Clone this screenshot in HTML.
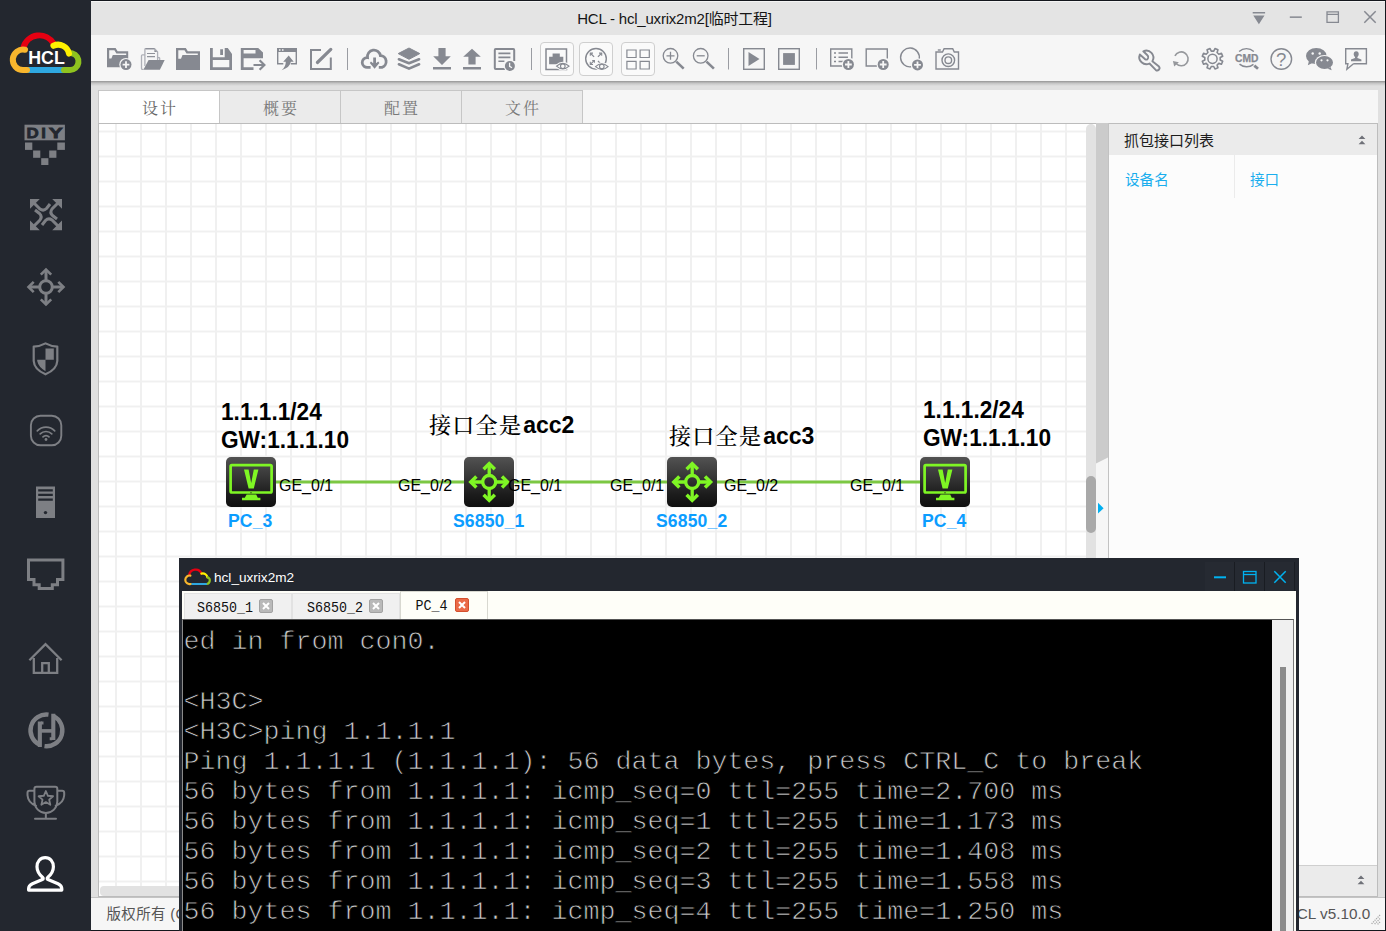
<!DOCTYPE html>
<html lang="zh-CN">
<head>
<meta charset="utf-8">
<title>HCL - hcl_uxrix2m2[临时工程]</title>
<style>
*{box-sizing:border-box;margin:0;padding:0}
html,body{width:1386px;height:931px;overflow:hidden;background:#e0e0e0;font-family:"Liberation Sans","Noto Sans CJK SC",sans-serif}
.abs{position:absolute}
#sidebar{left:0;top:0;width:91px;height:931px;background:#23272f}
#topline{left:91px;top:0;width:1295px;height:1px;background:#14171d}
#titlebar{left:91px;top:1px;width:1294px;height:34px;background:#e4e4e4;border-top:1px solid #f4f4f4}
#title{left:91px;top:1.6px;width:1167px;height:34px;line-height:34px;text-align:center;font-size:15px;letter-spacing:-.2px;color:#151515;white-space:nowrap}
#rightedge{left:1385px;top:0;width:1px;height:931px;background:#14171d}
#toolbar{left:91px;top:35px;width:1294px;height:46px;background:#f6f6f6;}
#tshadow{left:91px;top:81px;width:1294px;height:5px;background:linear-gradient(rgba(0,0,0,.34),rgba(0,0,0,.12) 45%,rgba(0,0,0,0))}
.tbtn{top:42px;width:34px;height:34px;background:#fafafa;border:1px solid #cfcfcf;border-radius:4px}
#tabstrip{left:98px;top:90px;width:1280px;height:33px;background:#f6f6f6}
.tab{top:90px;width:122px;height:34px;border:1px solid #c6c6c6;background:#ebebeb;color:#787878;font-family:"Liberation Serif","Noto Serif CJK SC",serif;font-size:16px;line-height:35px;text-align:center;letter-spacing:2px;padding-left:2px}
.tab.on{background:#fff;border-bottom-color:#fff;color:#666}
#canvas{left:98px;top:123px;width:1000px;height:774px;background:#fff;border:1px solid #bcbcbc;overflow:hidden}
#grid{left:0;top:0;width:1000px;height:774px;
background-image:linear-gradient(to right,#f0f0f0 0,#f0f0f0 2px,transparent 2px),linear-gradient(to bottom,#f0f0f0 0,#f0f0f0 2px,transparent 2px);
background-size:25px 25px,25px 25px;background-position:16px 0,0 6.5px}
#vscroll{left:1086px;top:124px;width:10px;height:762px;background:#e2e2e2;border-radius:5px 5px 0 0}
#vthumb{left:1086px;top:476px;width:10px;height:57px;background:#a9a9a9;border-radius:5px}
#hscroll{left:100px;top:886px;width:986px;height:10px;background:#e2e2e2;border-radius:4px 0 0 4px}
#splitter{left:1096px;top:123px;width:12px;height:774px;background:#cbcbcb}
#panel{left:1109px;top:123px;width:269px;height:774px;background:#fcfcfc;border:1px solid #bdbdbd;border-left:none}
.phead{left:1109px;width:268px;height:31px;background:#ebebeb}
#statusbar{left:91px;top:897px;width:1294px;height:33px;background:#f6f6f6;border-top:1px solid #c4c4c4}
#bottomline{left:91px;top:930px;width:1295px;height:1px;background:#14171d}
.lbl{position:absolute;white-space:nowrap;line-height:1}
.big{font-weight:bold;font-size:22.67px;color:#000;transform:scaleY(1.06);transform-origin:0 80%}
.ge{font-size:16px;color:#000}
.dev{font-weight:bold;font-size:17.6px;letter-spacing:.12px;color:#0c9dff}
.cn{font-family:"Liberation Serif","Noto Serif CJK SC",serif;font-size:22px;letter-spacing:1.3px;color:#000;font-weight:500}
.cn b{font-family:"Liberation Sans",sans-serif;font-size:23px;font-weight:bold;letter-spacing:0;margin-left:1px}
.node{position:absolute;width:50px;height:50px;border-radius:5px;background:linear-gradient(#525252 0%,#3a3a3a 35%,#1c1c1c 75%,#101010 100%)}
#term{left:179px;top:558px;width:1120px;height:373px;background:#23272f}
#termtabs{left:182px;top:591px;width:1114px;height:29px;background:#fefef8}
.ttab{position:absolute;top:593px;height:26px;background:#f0f0f0;border:1px solid #e2e2e2;border-bottom:none;font-family:"Liberation Mono",monospace;font-size:13.33px;color:#111;line-height:29px;white-space:nowrap}
.ttab span{display:inline-block;transform:scaleY(1.14);transform-origin:0 72%}
.ttab.on{top:591px;height:29px;background:#fefef8;border-color:#d8d8d0}
.tx{position:absolute;width:14px;height:14px;border-radius:2px;background:#b4b4b4}
#termscreen{left:182px;top:619px;width:1090px;height:312px;background:#000;overflow:hidden;border-top:1px solid #555;border-left:1px solid #8a8a8a}
#termtext{position:absolute;left:.5px;top:7px;font-family:"Liberation Mono",monospace;font-size:26.67px;line-height:30px;color:#c8c8c8;white-space:pre;-webkit-text-stroke:.75px #000}
#tscroll{left:1272px;top:619px;width:22px;height:312px;background:#f0f0f0;border-right:1px solid #7a7a7a;border-top:1px solid #555}
#tthumb{left:1280px;top:667px;width:6px;height:264px;background:#8b8b8b}
</style>
</head>
<body>
<div id="sidebar" class="abs"></div>
<div id="topline" class="abs"></div>
<div id="titlebar" class="abs"></div>
<div id="title" class="abs">HCL - hcl_uxrix2m2[临时工程]</div>
<div id="toolbar" class="abs"></div>
<div id="tshadow" class="abs"></div>
<div class="abs tbtn" style="left:540px"></div>
<div class="abs tbtn" style="left:579px"></div>
<div class="abs tbtn" style="left:621px"></div>
<svg class="abs" style="left:91px;top:0" width="1295" height="90" viewBox="91 0 1295 90">
<g fill="#868991">
<!-- window controls -->
<path d="M1252.700 12h12.400v1.400h-12.400zM1253.300 15.600h11.200l-5.600 8.600z"/>
<rect x="1289.800" y="16.400" width="12" height="1.500"/>
<!-- 1 new folder -->
<path d="M107 48h8.600l2 3.200h10.600v16h-21.200z"/>
<path d="M109.200 50.200h5.200l2 3.200h9.800v1.600h-13.400l-1.400 3.400h-2.200z" fill="#f6f6f6"/>
<circle cx="126" cy="64.600" r="6.700" fill="#f6f6f6"/><circle cx="126" cy="64.600" r="5.500"/>
<path d="M122.600 63.700h2.500v-2.500h1.800v2.500h2.500v1.800h-2.500v2.500h-1.800v-2.500h-2.500z" fill="#f6f6f6"/>
<!-- 2 open folder with docs -->
<path d="M148.600 60.100h16.100l-4.800 9.700h-16.500z"/><path d="M154.400 48.300l3.600 3.800h-3.600z" fill="#90939a"/>
<!-- 3 folder -->
<path d="M176 48h9.800l2 3.200h12.200v18.800h-24z"/>
<path d="M178.300 50.200h6.200l2 3.200h11.300v1.700h-15.300l-1.500 3.600h-2.700z" fill="#f6f6f6"/>
<!-- 4 save -->
<path d="M210 48h2.800v9.200h11.900V48h3.100l4.200 6v16h-22zM212.800 60v7.300h16.500V60zM220.200 49.300h2.800v5.700h-2.800z" fill-rule="evenodd"/>
<!-- 5 save as -->
<path d="M240.800 48h17.400l4.800 4.600v5.600H243.600v9.100h9.900v2.700h-12.700zM243.600 50.100v3.500h11.900v-3.500z" fill-rule="evenodd"/>
<!-- 6 export -->
<path d="M277 48h20v4h-20z"/>
<path d="M288.700 55.600l5 6.200h-2.900q-.6 5.600-9.200 8.400q4.200-3.200 4.200-8.400h-2.600z"/>
<!-- 10 layers -->
<path d="M409 48l10.800 5.600-10.800 5.700-10.800-5.700z" stroke="#868991" stroke-width="1" stroke-linejoin="round"/>
<!-- 11 download -->
<path d="M438.400 48h7.200v8.300h5.200l-8.800 8.600-8.800-8.600h5.200zM433 67.100h18v2.400h-18z"/>
<!-- 12 upload -->
<path d="M472 48.800l8.800 8h-5.200v7.600h-7.200v-7.600h-5.200zM463 67.100h18v2.400h-18z"/>
<!-- play/stop -->
<path d="M748.500 52v14l11-7z"/><rect x="783.100" y="53.100" width="11.800" height="11.800"/>
</g>
<g fill="none" stroke="#868991">
<!-- window controls -->
<path d="M1327 11.900h11.400v10.400h-11.400zM1327 14.400h11.400" stroke-width="1.300"/>
<path d="M1364.300 11.300l11.400 11.400M1375.700 11.300l-11.400 11.400" stroke-width="1.500"/>
<!-- separators -->
<path d="M347.500 48v22M531.500 48v22M728.500 48v21.500M816.500 48v21.500" stroke="#9a9ca2" stroke-width="1"/>
<!-- 2 docs -->
<path d="M143.600 69.300h-1.200q-.9 0-.9-.9V55.800q0-.9.900-.9h2.600" stroke="#aeb0b7" stroke-width="1.300"/>
<path d="M144.900 66V49.400q0-.7.700-.7h9l3 3.200V60" stroke="#aeb0b7" stroke-width="1.300"/><path d="M145.600 48.700h8.800" stroke="#8d9098" stroke-width="1.300"/>
<path d="M147 53.500h8M147 56.600h8" stroke="#90939a" stroke-width="1.200"/><path d="M158 57.600h1q.7 0 .7.700V60" stroke="#aeb0b7" stroke-width="1.200"/>
<!-- 5 arrow -->
<path d="M253.500 65h10.500M259.600 60.200l4.800 4.800-4.800 4.800" stroke-width="2.200"/>
<!-- 6 export window -->
<path d="M277.700 51v12.800h5.600M290.800 63.800h5.500V51" stroke-width="1.400"/>
<path d="M279 50h1.500M282 50h1.500" stroke="#f6f6f6" stroke-width="1.500"/>
<!-- 7 edit -->
<path d="M321 50h-10v19h19.800V57.600" stroke-width="2"/><path d="M317.400 62.500L330.800 49.400" stroke-width="3.200" stroke-linecap="round"/>
<!-- 9 cloud download -->
<path d="M370.600 67.300H368A4.900 4.900 0 1 1 367.500 57.600A6.480 6.480 0 0 1 380.400 55.600A6 6 0 0 1 382 67.300H378.800" stroke-width="2.800" stroke-linecap="butt"/>
<!-- 10 layers -->
<path d="M398.900 59.300l10.100 4 10.100-4M398.900 64.300l10.100 4.300 10.100-4.300" stroke-width="2.600" stroke-linecap="round" stroke-linejoin="round"/>
<!-- 13 doc clock -->
<path d="M505 69h-9.300q-.9 0-.9-.9V49.900q0-.9.900-.9h17.600q.9 0 .9.900v11" stroke-width="2"/><path d="M498.400 53.400h12M498.400 57.400h12M498.400 61.300h6" stroke-width="1.600"/>
<!-- btn1 -->
<rect x="546" y="49" width="20.500" height="20.500" stroke-width="1.500"/>
<!-- btn2 -->
<circle cx="596" cy="58.800" r="10.300" stroke-width="1.400"/>
<path d="M590.700 53.500l3.400 3.400M601.300 53.500l-3.400 3.400M590.700 64.100l3.400-3.400M598 61l2.300 2.300" stroke-width="1.200"/>
<path d="M590.300 55.800v-2.700h2.700M599 53.100h2.700v2.700M592.200 60.500h2.200v2.200M590.300 61.800v2.700h2.700" stroke-width="1.100"/>
<!-- btn3 -->
<path d="M626.900 50h9.200v7.500h-9.200zM640.100 50h9.200v7.500h-9.200zM626.900 61.400h9.200v7.600h-9.200zM640.100 61.400h9.200v7.600h-9.200z" stroke-width="1.200"/>
<!-- zoom in/out -->
<circle cx="670.500" cy="55.800" r="7.300" stroke-width="1.300"/><path d="M666.500 55.800h8M670.500 51.800v8" stroke-width="1.300"/><path d="M676.300 61.600l7.400 7" stroke-width="2.600"/>
<circle cx="700.700" cy="55.800" r="7.300" stroke-width="1.300"/><path d="M696.700 55.800h8" stroke-width="1.300"/><path d="M706.500 61.600l7.400 7" stroke-width="2.600"/>
<!-- play/stop boxes -->
<rect x="743.700" y="48.700" width="20.600" height="20.600" stroke-width="1.400"/><rect x="778.700" y="48.700" width="20.600" height="20.600" stroke-width="1.400"/>
<!-- list+ -->
<path d="M843 66h-12.300V49h21.100v9.500" stroke-width="1.400"/><path d="M834 53h2M838.500 53h9.500M834 57.300h2M838.500 57.300h9.500M834 61.600h2M838.500 61.600h5" stroke-width="1.500"/>
<!-- rect+ -->
<path d="M877.500 66h-11.300V49h21.100v9.500" stroke-width="1.400"/>
<!-- circle+ -->
<path d="M911.500 66.700a9.400 9.400 0 1 1 7.700-7.500" stroke-width="1.400"/>
<!-- camera -->
<path d="M936 52h6.500l1.600-3.300h8.600l1.600 3.300h4.200v17H936z" stroke-width="1.400"/><path d="M937.800 50h3" stroke-width="1.400"/><circle cx="948.300" cy="60.200" r="6.300" stroke-width="1.400"/><circle cx="948.300" cy="60.200" r="3.300" stroke-width="1.400"/>
<!-- wrench -->
<path d="M1143.300 51.300A7.100 7.100 0 0 1 1152.400 61.300L1159 66.600A2.350 2.350 0 0 1 1155.700 69.900L1149.500 63.500A7.100 7.100 0 0 1 1139.800 54.500L1145.200 59.300Q1147.300 60.400 1148.100 58Q1148.500 56.300 1147.400 55.300z" stroke-width="1.900" stroke-linejoin="round"/>
<!-- refresh -->
<path d="M1174.950 55.900A6.900 6.900 0 1 1 1176.300 63.700" stroke="#96989c" stroke-width="1.600"/>
<!-- gear -->
<circle cx="1212.500" cy="58.800" r="4.600" stroke-width="1.500"/>
<!-- cmd arcs -->
<path d="M1239.100 51.500A10.800 10.800 0 0 1 1253.800 51.500M1239.500 64.100A11 11 0 0 0 1253.500 64.400" stroke-width="1.400"/><path d="M1254.300 65.600L1258 68.700" stroke-width="2.800"/>
<!-- help -->
<circle cx="1281.300" cy="59" r="10.300" stroke-width="1.400"/>
<!-- feedback -->
<path d="M1353.500 63.700h12.900V48.800h-20.700v14.900h2.200l-1 5.500 6.600-5.500" stroke-width="1.400" stroke-linejoin="miter"/>
</g>
<g fill="#868991">
<path d="M373.200 57.400h2.800v5.800l2.200-1.600 1.200 1.500-4.800 5.600-4.800-5.600 1.200-1.500 2.200 1.600z"/>
<!-- refresh arrowhead -->
<path d="M1172.900 61.100l6 1.100-4.700 4.400z" fill="#96989c"/>
<!-- clock -->
<circle cx="509.900" cy="66" r="6.200" fill="#f6f6f6"/><circle cx="509.900" cy="66" r="5"/><path d="M509.600 62.800v3.600l2.400 1.400" stroke="#f6f6f6" stroke-width="1.300" fill="none"/>
<!-- btn1 port -->
<path d="M552.600 53.400h7.200v3.400h3.500v7.400h-14.200v-7.400h3.500z"/>
<path d="M556.5 66.2Q562.8 60.6 569.1 66.2Q562.8 71.8 556.5 66.2z" fill="#fafafa" stroke="#fafafa" stroke-width="3"/><path d="M556.5 66.2Q562.8 60.6 569.1 66.2Q562.8 71.8 556.5 66.2z" fill="none" stroke="#868991" stroke-width="1.100"/><circle cx="562.8" cy="66.2" r="2.300" fill="none" stroke="#868991" stroke-width="1.100"/>
<path d="M595.5 66.6Q601.8 61.0 608.1 66.6Q601.8 72.2 595.5 66.6z" fill="#fafafa" stroke="#fafafa" stroke-width="3"/><path d="M595.5 66.6Q601.8 61.0 608.1 66.6Q601.8 72.2 595.5 66.6z" fill="none" stroke="#868991" stroke-width="1.100"/><circle cx="601.8" cy="66.6" r="2.300" fill="none" stroke="#868991" stroke-width="1.100"/>
<!-- plus circles -->
<g id="plusc"><circle cx="848.400" cy="64.500" r="6.700" fill="#f6f6f6"/><circle cx="848.400" cy="64.500" r="5.500"/><path d="M845 63.600h2.500v-2.500h1.800v2.500h2.500v1.800h-2.500v2.500h-1.800v-2.500H845z" fill="#f6f6f6"/></g>
<use href="#plusc" x="34.800"/><use href="#plusc" x="69.100" y=".4"/>
<!-- wechat -->
<ellipse cx="1316.300" cy="56" rx="10.300" ry="8"/><path d="M1309 61l-1.200 4.200 4.600-2.200z"/>
<ellipse cx="1324.500" cy="62.500" rx="9.700" ry="7.500" fill="#f6f6f6"/><ellipse cx="1324.500" cy="62.500" rx="8.500" ry="6.400"/><path d="M1330.500 67l1.200 3.200-4-1.400z"/>
<circle cx="1312.700" cy="53.500" r="1.200" fill="#f6f6f6"/><circle cx="1319.700" cy="53.500" r="1.200" fill="#f6f6f6"/>
<circle cx="1321.500" cy="60.300" r="1.100" fill="#f6f6f6"/><circle cx="1327.500" cy="60.300" r="1.100" fill="#f6f6f6"/>
<!-- feedback person -->
<path d="M1356.200 51.200a2.500 2.900 0 0 1 2.500 2.900c0 1.400-.6 2.400-1.300 3v.8l4 1.600v1.800h-10.400v-1.800l4-1.600v-.8c-.7-.6-1.300-1.600-1.300-3a2.500 2.900 0 0 1 2.500-2.900z"/>
</g>
<!-- gear teeth -->
<g fill="none" stroke="#868991" stroke-width="1.600" stroke-linejoin="round"><path d="M1213.72 51.10L1214.97 48.60L1217.97 49.84L1217.08 52.49L1218.81 54.22L1221.46 53.33L1222.70 56.33L1220.20 57.58L1220.20 60.02L1222.70 61.27L1221.46 64.27L1218.81 63.38L1217.08 65.11L1217.97 67.76L1214.97 69.00L1213.72 66.50L1211.28 66.50L1210.03 69.00L1207.03 67.76L1207.92 65.11L1206.19 63.38L1203.54 64.27L1202.30 61.27L1204.80 60.02L1204.80 57.58L1202.30 56.33L1203.54 53.33L1206.19 54.22L1207.92 52.49L1207.03 49.84L1210.03 48.60L1211.28 51.10z"/></g>
<text x="1246.700" y="61.600" text-anchor="middle" font-family="Liberation Sans, sans-serif" font-weight="bold" font-size="10.400" fill="#868991" stroke="#868991" stroke-width=".25" textLength="23.400" lengthAdjust="spacingAndGlyphs">CMD</text>
<text x="1281.200" y="65.700" text-anchor="middle" font-family="Liberation Sans, sans-serif" font-size="18.600" fill="#868991">?</text>
</svg>

<div id="tabstrip" class="abs"></div>
<div class="abs tab on" style="left:98px">设计</div>
<div class="abs tab" style="left:219px">概要</div>
<div class="abs tab" style="left:340px">配置</div>
<div class="abs tab" style="left:461px">文件</div>
<div id="canvas" class="abs"><div id="grid" class="abs"></div></div>
<svg class="abs" style="left:0;top:0" width="1386" height="931" viewBox="0 0 1386 931">
<line x1="276" y1="482" x2="920" y2="482" stroke="#7cc843" stroke-width="3"/>
</svg>
<div class="lbl big" style="left:221px;top:401px">1.1.1.1/24</div>
<div class="lbl big" style="left:221px;top:428.5px">GW:1.1.1.10</div>
<div class="lbl big" style="left:923px;top:399px">1.1.1.2/24</div>
<div class="lbl big" style="left:923px;top:426.5px">GW:1.1.1.10</div>
<div class="lbl cn" style="left:429px;top:414px">接口全是<b>acc2</b></div>
<div class="lbl cn" style="left:669px;top:425px">接口全是<b>acc3</b></div>
<div class="node" style="left:226px;top:457px"><svg width="50" height="50" viewBox="0 0 50 50"><rect x="4.600" y="8.100" width="41" height="27.400" rx="1.200" fill="none" stroke="#7ff624" stroke-width="2.700"/><path d="M18 12.6h4.6l2.6 13.5 2.6-13.5h4.6l-4.6 18.8h-5.2z" fill="#7ff624"/><path d="M20.6 37.6h9.6l1.6 3.2h2.6v2.4h-18.4v-2.4h2.8z" fill="#7ff624"/><circle cx="25" cy="35.8" r=".8" fill="#3a5a1a"/></svg></div>
<div class="node" style="left:920px;top:457px"><svg width="50" height="50" viewBox="0 0 50 50"><rect x="4.600" y="8.100" width="41" height="27.400" rx="1.200" fill="none" stroke="#7ff624" stroke-width="2.700"/><path d="M18 12.6h4.6l2.6 13.5 2.6-13.5h4.6l-4.6 18.8h-5.2z" fill="#7ff624"/><path d="M20.6 37.6h9.6l1.6 3.2h2.6v2.4h-18.4v-2.4h2.8z" fill="#7ff624"/><circle cx="25" cy="35.8" r=".8" fill="#3a5a1a"/></svg></div>
<div class="node" style="left:464px;top:457px"><svg width="50" height="50" viewBox="0 0 50 50"><g fill="none" stroke="#7ff624" stroke-width="3.300" stroke-linecap="butt" stroke-linejoin="miter"><circle cx="25.200" cy="25" r="6.500"/><path d="M25.200 18.500V7M25.200 31.500V43M18.700 25H7M31.700 25H43.400"/><path d="M19.600 12.200L25.200 6.600l5.600 5.600M19.600 37.800l5.600 5.600 5.600-5.600M12.400 19.400L6.800 25l5.600 5.600M38 19.400L43.600 25 38 30.600" stroke-width="3.500"/></g></svg></div>
<div class="node" style="left:667px;top:457px"><svg width="50" height="50" viewBox="0 0 50 50"><g fill="none" stroke="#7ff624" stroke-width="3.300" stroke-linecap="butt" stroke-linejoin="miter"><circle cx="25.200" cy="25" r="6.500"/><path d="M25.200 18.500V7M25.200 31.500V43M18.700 25H7M31.700 25H43.400"/><path d="M19.600 12.200L25.200 6.600l5.600 5.600M19.600 37.800l5.600 5.600 5.600-5.600M12.400 19.400L6.800 25l5.600 5.600M38 19.400L43.600 25 38 30.600" stroke-width="3.500"/></g></svg></div>
<div class="lbl ge" style="left:279px;top:478px">GE_0/1</div>
<div class="lbl ge" style="left:398px;top:478px">GE_0/2</div>
<div class="lbl ge" style="left:508px;top:478px">GE_0/1</div>
<div class="lbl ge" style="left:610px;top:478px">GE_0/1</div>
<div class="lbl ge" style="left:724px;top:478px">GE_0/2</div>
<div class="lbl ge" style="left:850px;top:478px">GE_0/1</div>
<div class="lbl dev" style="left:228px;top:513px">PC_3</div>
<div class="lbl dev" style="left:453px;top:513px">S6850_1</div>
<div class="lbl dev" style="left:656px;top:513px">S6850_2</div>
<div class="lbl dev" style="left:922px;top:513px">PC_4</div>

<div id="vscroll" class="abs"></div>
<div id="vthumb" class="abs"></div>
<div id="hscroll" class="abs"></div>
<div id="splitter" class="abs"></div>
<div id="panel" class="abs"></div>
<div class="abs phead" style="top:124px"></div>
<div class="lbl" style="left:1124px;top:133px;font-size:15px;color:#1c1c1c">抓包接口列表</div>
<svg class="abs" style="left:1357px;top:134px" width="10" height="12" viewBox="0 0 10 12"><path d="M5 1.6l3.4 3.4H1.6zM5 6.8l3.4 3.4H1.6z" fill="#6f7178"/></svg>
<div class="abs" style="left:1234px;top:155px;width:1px;height:43px;background:#ebebeb"></div>
<div class="lbl" style="left:1125px;top:172.5px;font-size:14.6px;color:#1aaeee">设备名</div>
<div class="lbl" style="left:1250px;top:172.5px;font-size:14.6px;color:#1aaeee">接口</div>
<div class="abs phead" style="top:865px;border-top:1px solid #cfcfcf"></div>
<svg class="abs" style="left:1356px;top:874px" width="10" height="12" viewBox="0 0 10 12"><path d="M5 1.6l3.4 3.4H1.6zM5 6.8l3.4 3.4H1.6z" fill="#6f7178"/></svg>
<svg class="abs" style="left:1096px;top:123px" width="12" height="440" viewBox="0 0 12 440"><path d="M0 340.500L12 334.500V440H0z" fill="#f6f6f6"/><path d="M2 379.800l5.600 5.400L2 390.600z" fill="#00aff0"/></svg>
<div id="pborder" class="abs" style="left:1108px;top:123px;width:1px;height:774px;background:#c2c2c2"></div>

<div id="statusbar" class="abs"></div>
<div class="lbl" style="left:106.500px;top:906.500px;font-size:14.500px;letter-spacing:.35px;color:#555">版权所有 (C) 2004-2024 新华三技术有限公司</div>
<div class="lbl" style="right:15.800px;top:906px;font-size:15.300px;color:#555">HCL v5.10.0</div>
<svg class="abs" style="left:1370px;top:914px" width="11" height="12" viewBox="0 0 11 12"><path d="M10 1L1 10.500M10 4.500L4 10.800M10 8L7 11" stroke="#a8a8a8" stroke-width="1.300" stroke-dasharray="1.200 1" fill="none"/></svg>

<div id="bottomline" class="abs"></div>
<div id="rightedge" class="abs"></div>
<svg class="abs" style="left:0;top:0" width="91" height="931" viewBox="0 0 91 931">
<!-- logo -->
<g fill="none" stroke-width="6" stroke-linecap="round">
<path d="M23.400 47.600A16.500 16.500 0 0 1 53.600 43.600" stroke="#e60012"/>
<path d="M29 70H63" stroke="#2ea7e0"/>
<path d="M72.200 53.300A8.500 8.500 0 0 1 69.700 70H64" stroke="#8fc31f"/>
<path d="M53.400 45.800A11 11 0 0 1 69 53.600" stroke="#fff100"/>
<path d="M25 49.800A10.200 10.200 0 1 0 23 70H27" stroke="#f8b62d"/>
</g>
<text x="46.500" y="64" text-anchor="middle" font-family="Liberation Sans, sans-serif" font-weight="bold" font-size="17.800" fill="#fff">HCL</text>
<g fill="#7d7f84">
<!-- DIY -->
<rect x="24.500" y="124.700" width="40.400" height="15.600"/>
<rect x="25" y="142.500" width="7.300" height="7.400"/><rect x="57.300" y="142.500" width="7.600" height="7.400"/>
<rect x="33.100" y="150.500" width="7.200" height="7.300"/><rect x="49.200" y="150.500" width="7.200" height="7.300"/>
<rect x="41.200" y="158.200" width="7.200" height="6.800"/>
<!-- cross arrows heads -->
<path d="M30 199h9.800L30 208.800zM62 199v9.800L52.200 199zM30 230.200v-9.800L39.800 230.200zM62 230.200H52.200L62 220.400z"/>
<!-- server -->
<path d="M36 486.500h19V518H36zM38.200 489.200v2.300h14.600v-2.300zM38.200 493.800v2.300h14.600v-2.300zM38.200 498.400v2.300h14.600v-2.300z" fill-rule="evenodd"/>
</g>
<circle cx="45.500" cy="512.600" r="1.700" fill="#23272f"/>
<g font-family="Liberation Sans, sans-serif" font-weight="bold" font-size="15.200" fill="#23272f" stroke="#23272f" stroke-width=".8" lengthAdjust="spacingAndGlyphs"><text x="26.500" y="138" textLength="12.200" lengthAdjust="spacingAndGlyphs">D</text><text x="41.200" y="138" textLength="4.600" lengthAdjust="spacingAndGlyphs">I</text><text x="48.800" y="138" textLength="14" lengthAdjust="spacingAndGlyphs">Y</text></g>
<g fill="none" stroke="#7d7f84">
<!-- cross arrows tails -->
<path d="M33 202l7 7q3.500 2.500 6.500-.5l3.500-4.500M59 202l-7 7q-2.500 3.500.5 6.500l4.500 3.500M33 227l7-7q2.500-3.500-.5-6.500l-4.500-3.500M59 227l-7-7q-3.500-2.500-6.500.5l-3.500 4.500" stroke-width="3"/>
<!-- switch -->
<g stroke-width="3"><circle cx="46" cy="287" r="6.300"/><path d="M46 280.700V270M46 293.300V304M39.700 287H29M52.300 287H63"/><path d="M40.800 274.700l5.200-5.200 5.200 5.200M40.800 299.300l5.200 5.200 5.200-5.200M33.700 281.800l-5.200 5.200 5.200 5.200M58.300 281.800l5.200 5.200-5.200 5.200" stroke-width="2.600"/></g>
<!-- shield -->
<path d="M45.500 343.400q-5.500 3-11.800 3.200v14.400q.5 8.500 11.800 13.300q11.300-4.800 11.800-13.300v-14.400q-6.300-.2-11.800-3.200z" stroke-width="2.200" stroke-linejoin="round"/>
<!-- wifi -->
<rect x="30.900" y="415.700" width="30.400" height="29.600" rx="9.500" stroke-width="1.900"/>
<path d="M37.300 430.800a12.300 12.300 0 0 1 17.400 0M40.200 433.900a8.200 8.200 0 0 1 11.600 0M43 436.800a4.200 4.200 0 0 1 6 0" stroke-width="1.700" stroke-linecap="round"/>
<!-- port -->
<path d="M28.500 560h34.400v19.500h-5.400v5.300h-5.200v3.800H39.200v-3.800H34v-5.300h-5.500z" stroke-width="3"/>
<!-- home -->
<path d="M29.400 660.200L45.500 644.200l16.100 16" stroke-width="2.300"/><path d="M33.800 658v14.800h23.400V658M42.200 672.800v-9.600h6.600v9.600" stroke-width="2.300"/>
<!-- H circle -->
<path d="M48.500 714.600A15.900 15.900 0 0 0 39.850 744.850M44.500 746.170A15.900 15.900 0 0 0 53.300 716.030" stroke-width="4.400"/>
<path d="M39.850 721.600V747M53.300 713.800V740.100" stroke-width="4.100"/><path d="M41 730.900H52" stroke-width="3.600"/><path d="M41 723.050h2.500M49.700 738.800h2.500" stroke-width="2.900"/>
<!-- trophy -->
<path d="M34.400 788.800q0-2 2-2h18.900q2 0 2 2v12.700a11.450 11.450 0 0 1-22.900 0zM45.850 813v5.700M35 818.700h21M34.400 790.800h-4.900q-2 0-2 2v2.500q.5 7.500 8.500 10.500M57.300 790.800h4.900q2 0 2 2v2.500q-.5 7.500-8.500 10.500" stroke-width="2" stroke-linecap="round"/>
<path d="M45.85 791.00L47.91 795.77L53.08 796.25L49.18 799.68L50.32 804.75L45.85 802.10L41.38 804.75L42.52 799.68L38.62 796.25L43.79 795.77z" stroke-width="1.800" stroke-linejoin="round"/>
</g>
<path d="M45.500 348.500H53.800V359.800H45.500zM37.200 359.800H45.500V371.200Q38.500 367 37.200 361z" fill="#7d7f84"/>
<circle cx="46" cy="439.500" r="1.400" fill="#7d7f84"/>
<!-- user -->
<path d="M45.200 857.600c-5 0-8.200 4-8.200 9.200c0 4.600 2.400 8 5.800 10.800c.6.600.6 1.600-.4 2l-10 4.200c-2.600 1.200-3.800 2.800-3.800 5v1.300h33.200v-1.300c0-2.200-1.200-3.800-3.800-5l-10-4.200c-1-.4-1-1.400-.4-2c3.400-2.800 5.800-6.200 5.800-10.800c0-5.200-3.200-9.200-8.200-9.200z" fill="none" stroke="#fff" stroke-width="3.200" stroke-linejoin="round"/>
</svg>

<div id="term" class="abs"></div>
<svg class="abs" style="left:183px;top:567px" width="30" height="20" viewBox="0 0 30 20" fill="none" stroke-width="2.200" stroke-linecap="round"><path d="M6.200 8.400A6.400 6.400 0 0 1 18.600 6.800" stroke="#e60012"/><path d="M18.400 6.600A4.600 4.600 0 0 1 24.400 10.400" stroke="#fff100"/><path d="M24.800 10.200A3.600 3.600 0 0 1 23.600 17" stroke="#8fc31f"/><path d="M9 17H23" stroke="#2ea7e0"/><path d="M7.400 8.600A4.300 4.300 0 1 0 7.600 17" stroke="#f8b62d"/></svg>
<div class="lbl" style="left:214px;top:570.5px;font-size:13.600px;color:#fff">hcl_uxrix2m2</div>
<div class="abs" style="left:1205px;top:562px;width:90px;height:29px;background:#262a32"></div>
<div class="abs" style="left:1234px;top:562px;width:1px;height:29px;background:#191c22"></div>
<div class="abs" style="left:1264px;top:562px;width:1px;height:29px;background:#191c22"></div>
<div class="abs" style="left:1294px;top:562px;width:1px;height:29px;background:#191c22"></div>
<svg class="abs" style="left:1205px;top:562px" width="90" height="29" viewBox="1205 562 90 29" fill="none" stroke="#00b2f0" stroke-width="1.500"><path d="M1214 577.300H1226" stroke-width="2"/><rect x="1243.500" y="571.500" width="12.500" height="11.500" stroke-width="1.300"/><path d="M1243.500 574.500h12.500" stroke-width="1.300"/><path d="M1274.300 571.300l11.400 11.400M1285.700 571.300l-11.400 11.400"/></svg>
<div id="termtabs" class="abs"></div>
<div class="ttab" style="left:184px;width:108px;padding-left:12px"><span>S6850_1</span></div>
<div class="ttab" style="left:292px;width:108px;padding-left:14px"><span>S6850_2</span></div>
<div class="ttab on" style="left:400px;width:88px;padding-left:14.500px"><span>PC_4</span></div>
<svg class="abs" style="left:259px;top:599px" width="14" height="14" viewBox="0 0 14 14"><rect x=".5" y=".5" width="13" height="13" rx="1.500" fill="#b9b9b9" stroke="#a2a2a2"/><path d="M4 4l6 6M10 4l-6 6" stroke="#fff" stroke-width="2"/></svg>
<svg class="abs" style="left:369px;top:599px" width="14" height="14" viewBox="0 0 14 14"><rect x=".5" y=".5" width="13" height="13" rx="1.500" fill="#b9b9b9" stroke="#a2a2a2"/><path d="M4 4l6 6M10 4l-6 6" stroke="#fff" stroke-width="2"/></svg>
<svg class="abs" style="left:455px;top:598px" width="14" height="14" viewBox="0 0 14 14"><rect x=".5" y=".5" width="13" height="13" rx="1.500" fill="#ea6a48" stroke="#d4502e"/><path d="M4 4l6 6M10 4l-6 6" stroke="#fff" stroke-width="2"/></svg>
<div id="termscreen" class="abs"><div id="termtext">ed in from con0.

&lt;H3C&gt;
&lt;H3C&gt;ping 1.1.1.1
Ping 1.1.1.1 (1.1.1.1): 56 data bytes, press CTRL_C to break
56 bytes from 1.1.1.1: icmp_seq=0 ttl=255 time=2.700 ms
56 bytes from 1.1.1.1: icmp_seq=1 ttl=255 time=1.173 ms
56 bytes from 1.1.1.1: icmp_seq=2 ttl=255 time=1.408 ms
56 bytes from 1.1.1.1: icmp_seq=3 ttl=255 time=1.558 ms
56 bytes from 1.1.1.1: icmp_seq=4 ttl=255 time=1.250 ms</div></div>
<div id="tscroll" class="abs"></div>
<div id="tthumb" class="abs"></div>
<div class="abs" style="left:1296px;top:591px;width:3px;height:340px;background:#23272f"></div>
<div class="abs" style="left:1294px;top:591px;width:2px;height:340px;background:#fefef8"></div>

</body>
</html>
